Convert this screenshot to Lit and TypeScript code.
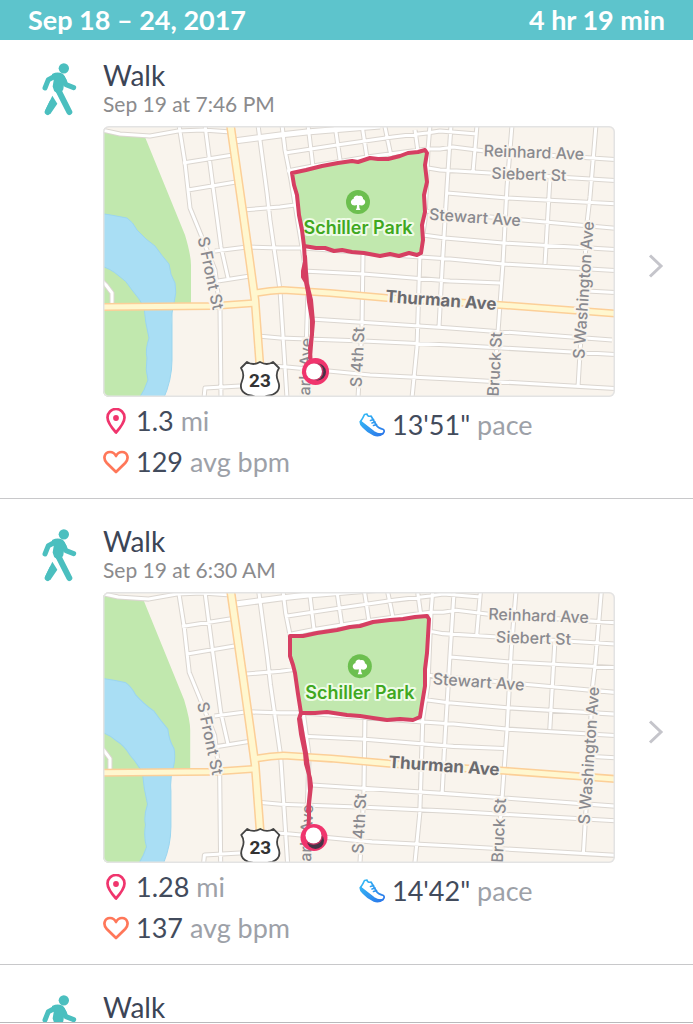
import { LitElement, html, svg, css, nothing } from "lit";
import { customElement, property } from "lit/decorators.js";

type Point = [number, number];

interface Route {
  loop: string;
  tail: string;
  end: Point;
  knob: Point;
  shade: Point;
}

interface Details {
  time: string;
  distance: string;
  pace: string;
  bpm: string;
  zoom: number;
  route: Route;
}

interface Activity {
  name: string;
  details?: Details;
}

const ACTIVITIES: Activity[] = [
  {
    name: "Walk",
    details: {
      time: "Sep 19 at 7:46 PM",
      distance: "1.3",
      pace: "13'51\"",
      bpm: "129",
      zoom: 1,
      route: {
        loop: "M292 173L306 170 322 166 338 163 352 161 358 162 370 158 378 159 388 159 400 156 408 153 418 152 425 150 427 153 425 165 427 182 424 195 425 212 422 225 423 240 421 253 417 255 409 253 399 256 390 254 380 256 364 253 352 252 342 250 334 251 325 248 316 248 304 246 302 230 299 215 297 195 294 185Z",
        tail: "M304 246L305 262 303 271 303 277 306 282 308 292 309 302 312 320 312 335 310 348 311 370M305 256L306 272 307 284 311 300 313 322 311 345 310 358",
        end: [315.5, 371.5],
        knob: [314, 371.5],
        shade: [317.5, 372],
      },
    },
  },
  {
    name: "Walk",
    details: {
      time: "Sep 19 at 6:30 AM",
      distance: "1.28",
      pace: "14'42\"",
      bpm: "137",
      zoom: 1.0158,
      route: {
        loop: "M290 170L303 170 317 167 337 164 350 161 360 160 373 156 390 154 403 153 415 151 427 150 429 153 428 170 427 187 425 203 425 220 422 238 420 251 413 254 400 253 387 254 373 252 360 250 347 249 327 246 315 247 301 247 298 228 295 207 293 199 290 190Z",
        tail: "M301 247L299 253 301 268 305 287 306 298 310 312 311 320 309 338 309 350 308 370M300 253L303 270 306 287 309 308 310 325 308 345",
        end: [314, 371.5],
        knob: [313.5, 369.5],
        shade: [315.5, 374.5],
      },
    },
  },
  { name: "Walk" },
];

const STREETS = [
  "M102 130L120 134 150 136 178 131 203 130 231 132",
  "M179 125L185 163 188 190 190 208 201 235 215 270 220 310 221 398",
  "M205 125L213 187 221 247 228 278",
  "M258 125L267 193 270 220 280 290 287 398",
  "M282 125L285 150 291 180 303 253 308 290 306 350 302 398",
  "M183 163L233 155M188 190L236 182",
  "M243 210L280 207 295 205",
  "M215 251L247 247 280 248 303 248",
  "M218 281L250 276",
  "M258 336L280 338 363 341 450 345 622 355",
  "M204 398L205 388 240 386M270 366L287 367 370 375 450 379 622 389",
  "M100 279L106 285 112 293 112 306",
  "M303 271L363 274 450 281 500 283M587 291L622 293",
  "M303 248L420 257 450 259 503 264 622 271",
  "M311 319L450 328 612 340",
  "M363 253L362 327 358 398",
  "M420 253L417 347 412 398",
  "M430 125L428 150 425 220 420 253",
  "M451 125L447 187 442 270 439 327",
  "M285 153L337 145 393 137 427 133 440 131 477 134",
  "M287 171L313 166 367 157 427 149 440 149 453 147 485 151 622 160",
  "M428 168L440 170 490 173 622 181",
  "M447 193L507 198 622 204",
  "M425 211L523 220 622 229",
  "M423 235L445 238 503 243 622 250",
  "M308 125L313 167M335 125L340 160M362 125L367 158M385 127L391 156M415 130L418 152",
  "M477 125L473 172",
  "M512 125L507 187 503 263 498 332 493 398",
  "M550 178L545 264",
  "M596 125L590 197 587 223 582 320 578 387",
].join("");

const AVENUE = "M234 141L280 135 307 132 380 126";
const MAIN_ROADS =
  "M100 307L213 306 256 303M256 293L270 291 283 290 330 293 387 298 500 305 622 314";
const HIGHWAY = "M230 122L235 157 243 213 250 263 255 300 260 367";

const walker = svg`
  <g fill="none" stroke="currentColor" stroke-linecap="round" stroke-linejoin="round">
    <circle cx="190.500" cy="204" r="15.500" fill="currentColor" stroke="none" />
    <path d="M134 263L144 238 165 227" stroke-width="15" />
    <path d="M186 230L197 253 220 262" stroke-width="15" />
    <path d="M170 262L207 335" stroke-width="18" />
    <path d="M155 308L142 335" stroke-width="18" />
    <path d="M158 223Q172 216 186 223L196 240 188 252 186 266 178 280 164 270 160 258 163 240Z" fill="currentColor" stroke-width="6" />
    <path d="M156 286L171 310 150 341 134 331Z" fill="currentColor" stroke="none" />
  </g>`;

@customElement("route-map")
export class RouteMap extends LitElement {
  @property({ attribute: false }) route!: Route;
  @property({ type: Number }) zoom = 1;

  static styles = css`
    :host {
      display: block;
    }
    .map {
      display: block;
      width: 100%;
      height: auto;
      border-radius: 6px;
    }
    .label {
      font-family: Inter, Roboto, sans-serif;
      font-size: 16px;
      font-weight: 500;
      fill: #8a8a8f;
      stroke: #f9f4ed;
      stroke-width: 4px;
      stroke-linejoin: round;
      paint-order: stroke;
    }
    .major {
      font-size: 17px;
      font-weight: 700;
      fill: #6b6b6f;
    }
    .park {
      font-size: 18px;
      font-weight: 600;
      fill: #40a81f;
      stroke: #eefbe6;
    }
    .shield {
      font-family: Roboto, Inter, sans-serif;
      font-size: 19px;
      font-weight: 700;
      fill: #333;
    }
  `;

  private place(x: number, y: number): Point {
    return [241 + (x - 241) * this.zoom, 320 + (y - 320) * this.zoom];
  }

  private label(text: string, x: number, y: number, turn: number, kind = "", anchor = "middle") {
    const [px, py] = this.place(x, y);
    return svg`<text class="label ${kind}" text-anchor=${anchor}
      transform="translate(${px} ${py}) rotate(${turn})" y="6">${text}</text>`;
  }

  render() {
    const { loop, tail, end, knob, shade } = this.route;
    const [sx, sy] = this.place(260, 379);
    const z = this.zoom;
    const view = `translate(${241 * (1 - z)} ${320 * (1 - z)}) scale(${z})`;
    return html`
      <svg class="map" viewBox="103 126 512 271" role="img" aria-label="Map of the walk around Schiller Park">
        <rect x="103" y="126" width="512" height="271" fill="#f9f4ed" />
        <g transform=${view} fill="none" stroke-linejoin="round">
          <path fill="#c1e8ae" d="M100 129L120 135 145 137 185 235Q191 255 191 265L191 306 150 306 150 400 100 400Z" />
          <path fill="#a9def4" stroke="#9bd5ef" stroke-width="1"
            d="M98 213Q112 215 127 218Q133 222 137 230Q146 240 155 246Q162 256 169 264Q170 275 175 283Q177 292 174 303Q171 312 172 325L172 360Q172 380 163 400L138 400Q145 390 148 380Q145 370 147 358Q145 350 149 338Q145 322 144 307Q139 298 132 290Q126 280 119 276Q110 268 98 265Z" />
          <path d=${STREETS} stroke="#dbd6d0" stroke-width="5" />
          <path d=${AVENUE} stroke="#dbd6d0" stroke-width="7" />
          <path d=${STREETS} stroke="#fff" stroke-width="3" />
          <path d=${AVENUE} stroke="#fff" stroke-width="5" />
          <path d=${MAIN_ROADS} stroke="#fccf98" stroke-width="8" />
          <path d=${HIGHWAY} stroke="#fccf98" stroke-width="9" />
          <path d=${MAIN_ROADS} stroke="#fff7cf" stroke-width="5" />
          <path d=${HIGHWAY} stroke="#fff7cf" stroke-width="6" />
        </g>
        <path d=${loop} fill="#c1e8ae" />
        ${this.label("Reinhard Ave", 534, 152, 2)}
        ${this.label("Siebert St", 529, 174, 2)}
        ${this.label("Stewart Ave", 475, 217, 4)}
        ${this.label("Thurman Ave", 441, 300, 4, "major")}
        ${this.label("S Front St", 211, 273, 78)}
        ${this.label("S 4th St", 357, 357, -87)}
        ${this.label("S Washington Ave", 583, 290, -86)}
        ${this.label("Bruck St", 496, 332, -87, "", "end")}
        ${this.label("Park Ave", 306, 338, -88, "", "end")}
        ${this.label("Schiller Park", 358, 228, 0, "park")}
        <g transform="translate(${this.place(358, 202)})">
          <circle r="12" fill="#6cbf4f" />
          <path fill="#fff" d="M-2.200 8Q-.8 6-1 3C-3 4-6.500 3.500-7 1C-7.500-1.500-5.500-3-4.500-3C-4.500-6 -1-7.500 1-6C3.500-7 5.500-4.500 5-3C7.500-2 8 1 6 2.500C4.500 4 2.500 3.500 1.200 3Q1 6 2.500 8Z" />
        </g>
        <g transform="translate(${sx} ${sy})">
          <path fill="#fff" stroke="#444" stroke-width="1.800" stroke-linejoin="round"
            d="M-13 -17Q-7 -13 0 -17Q7 -13 13 -17L19 -11Q15 -5 18 2Q22 12 12 16Q4 17 0 21Q-4 17 -12 16Q-22 12 -18 2Q-15 -5 -19 -11Z" />
          <text class="shield" text-anchor="middle" y="8">23</text>
        </g>
        <g fill="none" stroke="#d63f62" stroke-width="4" stroke-linejoin="round" stroke-linecap="round">
          <path d=${loop} />
          <path d=${tail} />
        </g>
        <circle cx=${end[0]} cy=${end[1]} r="13.500" fill="#f0356d" />
        <circle cx=${shade[0]} cy=${shade[1]} r="8.500" fill="#463346" />
        <circle cx=${knob[0]} cy=${knob[1]} r="9.500" fill="#f0356d" opacity=".7" />
        <circle cx=${knob[0]} cy=${knob[1]} r="8" fill="#fff" />
        <rect x="103" y="126" width="512" height="271" rx="6" fill="none" stroke="#e3e3e3" stroke-width="3" />
      </svg>`;
  }
}

@customElement("app-root")
export class AppRoot extends LitElement {
  static styles = css`
    :host {
      display: flex;
      flex-direction: column;
      height: 100vh;
      overflow: hidden;
      box-sizing: border-box;
      padding-bottom: 1px;
      background: #fff;
      font-family: Lato, "Open Sans", sans-serif;
      color: #424b5c;
    }
    .week {
      position: relative;
      z-index: 1;
      display: flex;
      justify-content: space-between;
      align-items: center;
      flex: none;
      padding: 0 28px;
      background: #5dc4cc;
      color: #fff;
      font-size: 27px;
      line-height: 40px;
      font-weight: 700;
    }
    .range,
    .total {
      margin: 0;
      font: inherit;
    }
    .list {
      flex: 1;
      min-height: 0;
      overflow: hidden;
      margin: -7px 0 0;
      padding: 0;
      list-style: none;
      border-bottom: 1px solid #b9b9bb;
    }
    .row {
      display: grid;
      grid-template-columns: 103px minmax(0, 1fr) 78px;
      padding: 0 0 16px;
      border-bottom: 1px solid #c8c8ca;
      color: inherit;
      text-decoration: none;
    }
    .walker {
      justify-self: end;
      width: 35px;
      height: 54px;
      margin: 29px 26px 0 0;
      color: #4bbfbf;
    }
    .title {
      margin: 25px 0 0;
      font-size: 28px;
      line-height: 34px;
      font-weight: 400;
      color: #3c4556;
    }
    .time {
      margin: 0 0 10px;
      font-size: 21px;
      line-height: 24px;
      color: #8b8b8d;
    }
    .stats {
      display: grid;
      grid-template-columns: 1fr 1fr;
      margin: 3px 0 0;
      padding: 0;
      list-style: none;
      font-size: 27px;
      line-height: 41px;
    }
    .stat {
      display: flex;
      align-items: center;
      gap: 7px;
    }
    .pace {
      position: relative;
      top: 4px;
    }
    .icon {
      flex: none;
      width: 26px;
      height: 26px;
    }
    .unit {
      color: #9da1a8;
    }
    .chevron {
      align-self: center;
      justify-self: center;
      width: 16px;
      height: 24px;
      margin: 16px 0 0 4px;
    }
  `;

  private details(walk: Details) {
    return html`
      <p class="time">${walk.time}</p>
      <route-map .route=${walk.route} .zoom=${walk.zoom}></route-map>
      <ul class="stats">
        <li class="stat">
          <svg class="icon" viewBox="0 0 26 26" aria-hidden="true">
            <path d="M13 24.500Q4.500 15 4.500 9.500A8.500 8.500 0 0 1 21.500 9.500Q21.500 15 13 24.500Z" fill="none" stroke="#f0356d" stroke-width="2.700" stroke-linejoin="round" />
            <circle cx="13" cy="10" r="2.900" fill="#f0356d" />
          </svg>
          <span>${walk.distance} <span class="unit">mi</span></span>
        </li>
        <li class="stat pace">
          <svg class="icon" viewBox="0 0 26 26" aria-hidden="true">
            <defs>
              <linearGradient id="shoe" x1="0" y1="0" x2="26" y2="26" gradientUnits="userSpaceOnUse">
                <stop offset="0" stop-color="#35c3f7" />
                <stop offset="1" stop-color="#2a6fe8" />
              </linearGradient>
            </defs>
            <g fill="none" stroke="url(#shoe)" stroke-width="1.700" stroke-linecap="round" stroke-linejoin="round">
              <path d="M1.500 9.500Q4 6 5.500 2.500L8 2Q8.500 5 12 4L17.500 13.500Q19 16 24.500 17.500Q26 19.500 24 21.500Q20 23 15 20Z" />
              <path d="M1.500 9.500Q.8 12 4 15Q9 20.500 15 23Q20 24.800 24 21.500L19 22.500Q13 21.500 8 15.500Z" fill="url(#shoe)" />
              <path d="M11.500 8.500L14.500 7.500M13 11L16 10M14.500 13.500L17.500 12.500" />
            </g>
          </svg>
          <span>${walk.pace} <span class="unit">pace</span></span>
        </li>
        <li class="stat">
          <svg class="icon" viewBox="0 0 26 26" aria-hidden="true">
            <path d="M13 23L3.800 14C-.5 9.500 1.500 3 7 3Q11 3 13 7Q15 3 19 3C24.500 3 26.500 9.500 22.200 14Z" fill="none" stroke="#ff7759" stroke-width="2.700" stroke-linejoin="round" />
          </svg>
          <span>${walk.bpm} <span class="unit">avg bpm</span></span>
        </li>
      </ul>`;
  }

  private row({ name, details }: Activity) {
    return html`
      <li>
        <a class="row" href="#">
          <svg class="walker" viewBox="125 186 105 160" aria-hidden="true">${walker}</svg>
          <div>
            <h2 class="title">${name}</h2>
            ${details ? this.details(details) : nothing}
          </div>
          ${details
            ? html`<svg class="chevron" viewBox="0 0 16 24" aria-hidden="true">
                <path d="M2 1.500L13 12 2 22.500" fill="none" stroke="#c5c5cb" stroke-width="3" />
              </svg>`
            : nothing}
        </a>
      </li>`;
  }

  render() {
    return html`
      <header class="week">
        <h1 class="range">Sep 18 – 24, 2017</h1>
        <p class="total">4 hr 19 min</p>
      </header>
      <ul class="list">
        ${ACTIVITIES.map((activity) => this.row(activity))}
      </ul>`;
  }
}
